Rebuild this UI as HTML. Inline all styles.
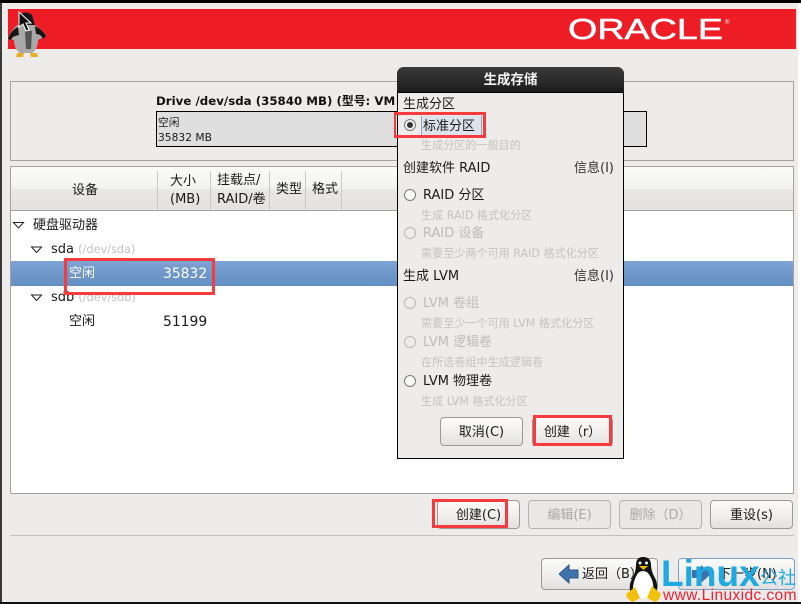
<!DOCTYPE html>
<html><head><meta charset="utf-8">
<style>
html,body{margin:0;padding:0;width:801px;height:604px;overflow:hidden;background:#edecea}
body{position:relative;font-family:"DejaVu Sans","WenQuanYi Zen Hei","Noto Sans CJK SC",sans-serif;font-size:13px;color:#1a1a1a}
div{position:absolute;box-sizing:border-box}
.t{white-space:nowrap;line-height:16px;height:16px;margin-top:1px}
.g{color:#bdbcba}
.s{font-size:11.1px;color:#c4c3c1}
.b{border:1px solid #9a9996;border-radius:4px;background:linear-gradient(#fbfbfa,#f1f0ee 50%,#e2e1df);text-align:center;line-height:29px;height:29px}
.d{color:#aaa9a7;background:#e9e8e6;border-color:#b5b4b1}
.r{border:3px solid #f53b3e}
.o{width:12px;height:12px;border:1px solid #77767a;border-radius:50%;background:#fbfbfa}
.od{border-color:#b9b8b6;background:#eeedeb}
.sep{width:1px;background:#c9c8c5;top:171px;height:38px}
svg{position:absolute}
</style></head><body>
<div style="left:0;top:0;width:801px;height:3px;background:#000"></div>
<div style="left:0;top:3px;width:2px;height:600px;background:#3a3a3a"></div>
<div style="left:798px;top:3px;width:3px;height:600px;background:#fff"></div>
<div style="left:0;top:602px;width:801px;height:2px;background:#111"></div>

<div style="left:8px;top:9px;width:788px;height:40px;background:#ee1c25"></div>
<svg style="left:560px;top:9px" width="180" height="40"><text x="8" y="30" font-family="Liberation Sans" font-size="29" fill="#fff" stroke="#fff" stroke-width=".5" textLength="155" lengthAdjust="spacingAndGlyphs">ORACLE</text><text x="165" y="15" font-family="Liberation Sans" font-size="6" fill="#fff">®</text></svg>

<svg style="left:8px;top:11px" width="40" height="48" viewBox="0 0 40 48">
<path d="M11 4 Q18 -1 24 4 L27 14 Q34 18 38 25 L30 29 Q30 38 24 42 L12 42 Q6 38 6 29 L0 28 Q3 18 10 14Z" fill="#a9a9a9"/>
<path d="M11 4 Q18 -1 24 4 L27 14 L10 14Z" fill="#161616"/>
<path d="M0 28 Q3 19 10 16 L11 24 Q4 25 3 29Z M38 25 Q34 18 27 15 L28 23 Q33 23 35 28Z" fill="#161616"/>
<path d="M17 20 L24 20 L23 38 L18 38Z" fill="#555"/>
<path d="M9 42 L16 42 L15 46 L8 46Z M22 42 L29 42 L30 46 L23 46Z" fill="#e8b020"/>
<path d="M11 1 L11 16 L15 13 L18 20 L21 19 L18 12 L23 12Z" fill="#111" stroke="#fff" stroke-width="1"/>
</svg>

<!-- drive box -->
<div style="left:10px;top:81px;width:784px;height:80px;border:1px solid #a3a2a0"></div>
<div class="t" style="left:156px;top:92px;font-weight:bold;font-size:11.8px;color:#111">Drive /dev/sda (35840 MB) (型号: VM</div>
<div style="left:156px;top:111px;width:491px;height:36px;border:1px solid #000;background:#dfdfdf"></div>
<div class="t" style="left:158px;top:115px;font-size:10.7px;height:14px;line-height:14px">空闲</div>
<div class="t" style="left:158px;top:130px;font-size:10.7px;height:14px;line-height:14px">35832 MB</div>

<!-- tree -->
<div style="left:10px;top:166px;width:784px;height:328px;border:1px solid #a3a2a0;background:#fff"></div>
<div style="left:11px;top:167px;width:782px;height:44px;background:linear-gradient(#fbfbfa,#f2f2f0 50%,#e9e8e6 52%,#e3e2e0);border-bottom:1px solid #a3a2a0"></div>
<div class="sep" style="left:157px"></div>
<div class="sep" style="left:210px"></div>
<div class="sep" style="left:269px"></div>
<div class="sep" style="left:305px"></div>
<div class="sep" style="left:341px"></div>
<div class="t" style="left:72px;top:182px">设备</div>
<div class="t" style="left:170px;top:173px">大小</div>
<div class="t" style="left:170px;top:191px">(MB)</div>
<div class="t" style="left:217px;top:172px">挂载点/</div>
<div class="t" style="left:217px;top:191px">RAID/卷</div>
<div class="t" style="left:276px;top:181px">类型</div>
<div class="t" style="left:312px;top:181px">格式</div>

<div style="left:11px;top:261px;width:782px;height:25px;background:linear-gradient(#7fa4d5,#6f97c9 50%,#6390c4)"></div>
<svg style="left:0;top:210px" width="60" height="100">
<path d="M13.500 12.500 H23.500 L18.500 18Z M31.500 37 H41.500 L36.500 42.500Z M31.500 85 H41.500 L36.500 90.500Z" fill="#fff" stroke="#222" stroke-width="1"/>
</svg>
<div class="t" style="left:33px;top:217px">硬盘驱动器</div>
<div class="t" style="left:51px;top:241px">sda <span style="font-size:11.3px;color:#c2c2c2">(/dev/sda)</span></div>
<div class="t" style="left:69px;top:265px;color:#fff">空闲</div>
<div class="t" style="left:163px;top:265px;color:#fff;font-size:13.9px">35832</div>
<div class="t" style="left:51px;top:289px">sdb <span style="font-size:11.3px;color:#c2c2c2">(/dev/sdb)</span></div>
<div class="t" style="left:69px;top:313px">空闲</div>
<div class="t" style="left:163px;top:313px;font-size:13.9px">51199</div>
<div class="r" style="left:64px;top:258px;width:151px;height:37px"></div>

<!-- main buttons -->
<div class="b" style="left:437px;top:500px;width:83px">创建(C)</div>
<div class="b d" style="left:528px;top:500px;width:83px">编辑(E)</div>
<div class="b d" style="left:619px;top:500px;width:83px">删除（D）</div>
<div class="b" style="left:710px;top:500px;width:83px">重设(s)</div>
<div class="r" style="left:432px;top:499px;width:76px;height:29px"></div>
<div style="left:10px;top:535px;width:784px;height:1px;background:#c2c1bf"></div>

<div class="b" style="left:541px;top:558px;width:117px;height:32px;line-height:32px;text-align:left;padding-left:40px">返回（B）</div>
<svg style="left:559px;top:564px" width="22" height="20"><path d="M0 10 L10 1 V6 H19 V14 H10 V19Z" fill="#3f73ae" stroke="#2a5586"/></svg>
<div class="b" style="left:678px;top:558px;width:117px;height:32px;line-height:32px;border-color:#7f9fc7;text-align:left;padding-left:39px">下一步(N)</div>
<svg style="left:690px;top:564px" width="22" height="20"><path d="M21 10 L11 1 V6 H2 V14 H11 V19Z" fill="#3f73ae"/></svg>

<!-- watermark -->
<svg style="left:625px;top:556px" width="37" height="47" viewBox="0 0 37 47">
<path d="M11 9 Q11 1 18 1 Q26 1 26 9 Q26 15 30 22 Q34 30 31 38 L28 42 L10 42 L6 38 Q3 30 7 23 Q11 16 11 9Z" fill="#111"/>
<path d="M13 17 Q18 13 23 17 Q30 26 28 37 L24 42 L12 42 L8 37 Q7 26 13 17Z" fill="#fff"/>
<path d="M14 10 L23 10 L18.500 14Z" fill="#f2b705"/>
<circle cx="15" cy="7" r="1.500" fill="#fff"/><circle cx="21.500" cy="7" r="1.500" fill="#fff"/>
<path d="M1 38 L10 31 L15 42 L8 46 Q2 44 1 38Z M36 38 L27 30 L22 42 L30 46 Q35 44 36 38Z" fill="#f2c10c"/>
</svg>
<div class="t" style="left:661px;top:554px;height:38px;line-height:38px;font-family:'Liberation Sans',sans-serif;font-size:37px;font-weight:bold;color:#1fa9e0">Linux</div>
<div class="t" style="left:760px;top:566px;height:20px;line-height:20px;font-size:18px;color:#1fa9e0;font-family:'Noto Sans CJK SC',sans-serif">公社</div>
<div class="t" style="left:663px;top:587px;font-family:'Liberation Sans',sans-serif;font-size:15.5px;color:#ee2233;letter-spacing:.4px">www.Linuxidc.com</div>

<!-- dialog -->
<div style="left:397px;top:67px;width:227px;height:392px;border:1px solid #000;border-top:0;border-radius:7px 7px 0 0;background:#edecea"></div>
<div style="left:397px;top:67px;width:227px;height:26px;background:linear-gradient(#3a3a3a,#1c1c1c);border-radius:7px 7px 0 0;border-bottom:1px solid #000;color:#f2f2f2;font-weight:bold;text-align:center;line-height:27px;font-size:13.5px">生成存储</div>
<div class="t" style="left:403px;top:96px">生成分区</div>
<div class="o" style="left:404px;top:119px;background:#f4f4f3"></div>
<div style="left:407px;top:122px;width:6px;height:6px;border-radius:50%;background:#333"></div>
<div style="left:421px;top:116px;width:61px;height:19px;background:#dde3ec;border-left:1px solid #8ea4c0;border-right:1px solid #8ea4c0"></div>
<div class="t" style="left:423px;top:118px">标准分区</div>
<div class="r" style="left:394px;top:112px;width:92px;height:26px;border-left-width:2px"></div>
<div class="t s" style="left:421px;top:137px">生成分区的一般目的</div>

<div class="t" style="left:403px;top:160px">创建软件 RAID</div>
<div class="t" style="left:574px;top:160px;color:#333">信息(I)</div>
<div class="o" style="left:404px;top:189px"></div>
<div class="t" style="left:423px;top:187px">RAID 分区</div>
<div class="t s" style="left:421px;top:207px">生成 RAID 格式化分区</div>
<div class="o od" style="left:404px;top:227px"></div>
<div class="t g" style="left:423px;top:225px">RAID 设备</div>
<div class="t s" style="left:421px;top:245px">需要至少两个可用 RAID 格式化分区</div>

<div class="t" style="left:403px;top:268px">生成 LVM</div>
<div class="t" style="left:574px;top:268px;color:#333">信息(I)</div>
<div class="o od" style="left:404px;top:297px"></div>
<div class="t g" style="left:423px;top:295px">LVM 卷组</div>
<div class="t s" style="left:421px;top:315px">需要至少一个可用 LVM 格式化分区</div>
<div class="o od" style="left:404px;top:336px"></div>
<div class="t g" style="left:423px;top:334px">LVM 逻辑卷</div>
<div class="t s" style="left:421px;top:354px">在所选卷组中生成逻辑卷</div>
<div class="o" style="left:404px;top:375px"></div>
<div class="t" style="left:423px;top:373px">LVM 物理卷</div>
<div class="t s" style="left:421px;top:393px">生成 LVM 格式化分区</div>

<div class="b" style="left:440px;top:417px;width:83px">取消(C)</div>
<div class="b" style="left:532px;top:417px;width:81px">创建（r）</div>
<div class="r" style="left:533px;top:415px;width:79px;height:31px"></div>
</body></html>
